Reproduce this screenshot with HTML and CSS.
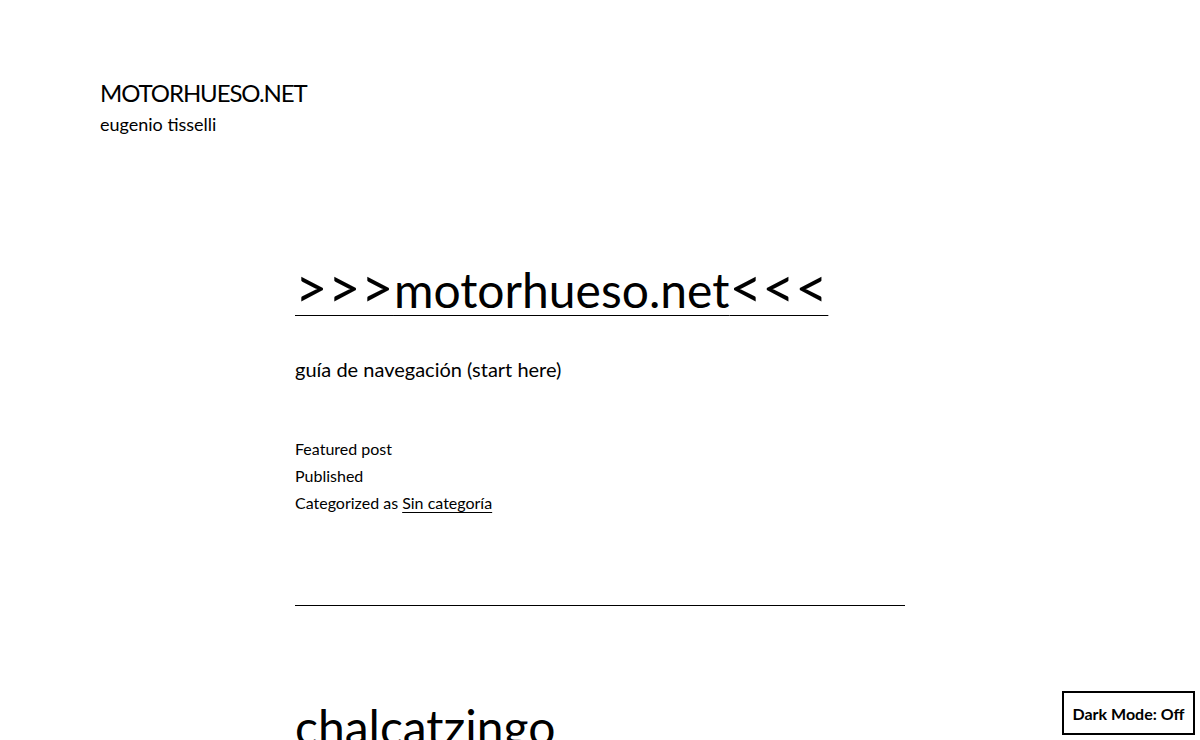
FILE: index.html
```html
<!DOCTYPE html>
<html lang="es">
<head>
<meta charset="utf-8">
<title>MOTORHUESO.NET</title>
<link rel="stylesheet" href="styles.css">
</head>
<body>
<header class="site-header">
  <p class="site-title"><a href="#">MOTORHUESO.NET</a></p>
  <p class="site-description">eugenio tisselli</p>
</header>
<main class="site-main">
  <article class="post">
    <h2 class="entry-title"><a href="#"><span class="chev">&gt;&gt;&gt;</span>motorhueso.net<span class="chev">&lt;&lt;&lt;</span></a></h2>
    <p class="entry-excerpt">guía de navegación (start here)</p>
    <footer class="entry-footer">
      <span class="meta-line">Featured post</span>
      <span class="meta-line">Published</span>
      <span class="meta-line">Categorized as <a href="#">Sin categoría</a></span>
    </footer>
  </article>
  <hr class="post-separator">
  <article class="post">
    <h2 class="entry-title next"><a href="#">chalcatzingo</a></h2>
  </article>
</main>
<button class="dark-toggle" type="button">Dark Mode: Off</button>
</body>
</html>
```
FILE: styles.css
```css
html, body {
  margin: 0;
  padding: 0;
  background: #fff;
  color: #000;
  font-family: "Lato", "Open Sans", sans-serif;
}
a { color: #000; }
.site-header {
  padding: 78px 100px 0;
}
.site-title {
  margin: 0;
  font-size: 24px;
  line-height: 30px;
  letter-spacing: -1.1px;
  text-transform: uppercase;
}
.site-title a { text-decoration: none; }
.site-description {
  margin: 2px 0 0;
  font-size: 18px;
  line-height: 28px;
}
.site-main {
  width: 610px;
  margin: 0 auto;
  padding-top: 121px;
}
.entry-title {
  margin: 0;
  font-weight: 400;
  font-size: 48px;
  line-height: 62px;
}
.entry-title a {
  text-decoration: underline;
  text-decoration-thickness: 1px;
  text-underline-offset: 7px;
}
.entry-title .chev {
  font-size: 56px;
  line-height: 0;
  letter-spacing: 0.5px;
}
.entry-title.next a { text-decoration: none; }
.entry-excerpt {
  margin: 31px 0 0;
  font-size: 20px;
  line-height: 34px;
}
.entry-footer {
  margin-top: 49px;
  display: flex;
  flex-direction: column;
  font-size: 16px;
  line-height: 27px;
}
.entry-footer a {
  text-decoration-thickness: 1px;
  text-underline-offset: 3px;
}
.post-separator {
  margin: 89px 0 0;
  border: 0;
  border-top: 1px solid #000;
  height: 0;
}
.post-separator + .post { margin-top: 90px; }
.dark-toggle {
  position: fixed;
  right: 5px;
  bottom: 5px;
  width: 133px;
  height: 44px;
  padding: 0 8px;
  background: #fff;
  color: #000;
  border: 2px solid #000;
  border-radius: 0;
  font-family: "Lato", "Open Sans", sans-serif;
  font-size: 16px;
  font-weight: 700;
  white-space: nowrap;
}
```
